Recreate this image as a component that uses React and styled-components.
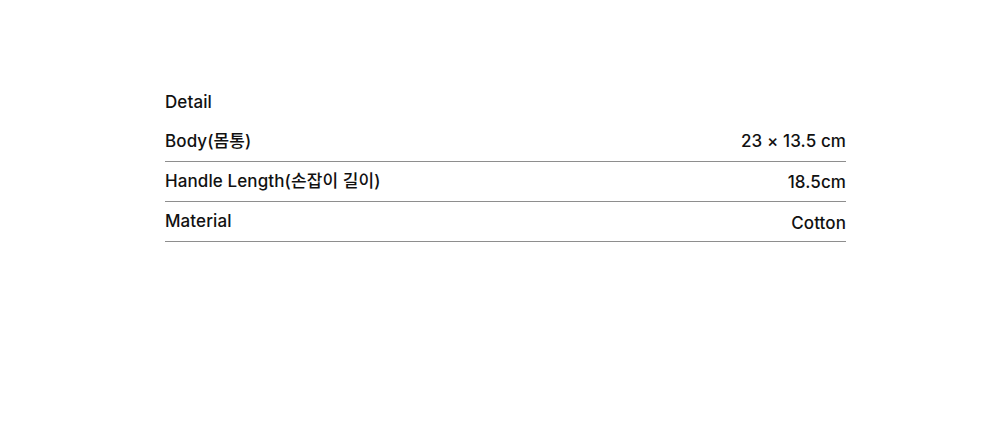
import styled, { createGlobalStyle } from "styled-components";

const GlobalStyle = createGlobalStyle`
  body {
    margin: 0;
    background: #fff;
    font-family: Inter, "Noto Sans CJK KR", sans-serif;
    color: #111;
  }
`;

const Page = styled.div`
  padding: 83px 154px 0 165px;
`;

const Table = styled.div`
  display: flex;
  flex-direction: column;
  width: 681px;
`;

const Title = styled.div`
  font-size: 17px;
  font-weight: 500;
  letter-spacing: 0.1px;
  line-height: 24px;
  padding: 7px 0 8px;
`;

const Row = styled.div`
  display: flex;
  justify-content: space-between;
  align-items: flex-start;
  font-size: 17px;
  font-weight: 500;
  letter-spacing: 0.1px;
  line-height: 24px;
  padding: 7px 0 8px;
  border-bottom: 1px solid #8e8e8e;
`;

const Label = styled.span``;

const Value = styled.span`
  margin-top: ${({ $shift }) => $shift || 0}px;
  margin-bottom: -${({ $shift }) => $shift || 0}px;
`;

const specs = [
  { label: "Body(몸통)", value: "23 × 13.5 cm", shift: 0 },
  { label: "Handle Length(손잡이 길이)", value: "18.5cm", shift: 1 },
  { label: "Material", value: "Cotton", shift: 2 },
];

export default function App() {
  return (
    <>
      <GlobalStyle />
      <Page>
        <Table>
          <Title>Detail</Title>
          {specs.map((s) => (
            <Row key={s.label}>
              <Label>{s.label}</Label>
              <Value $shift={s.shift}>{s.value}</Value>
            </Row>
          ))}
        </Table>
      </Page>
    </>
  );
}
